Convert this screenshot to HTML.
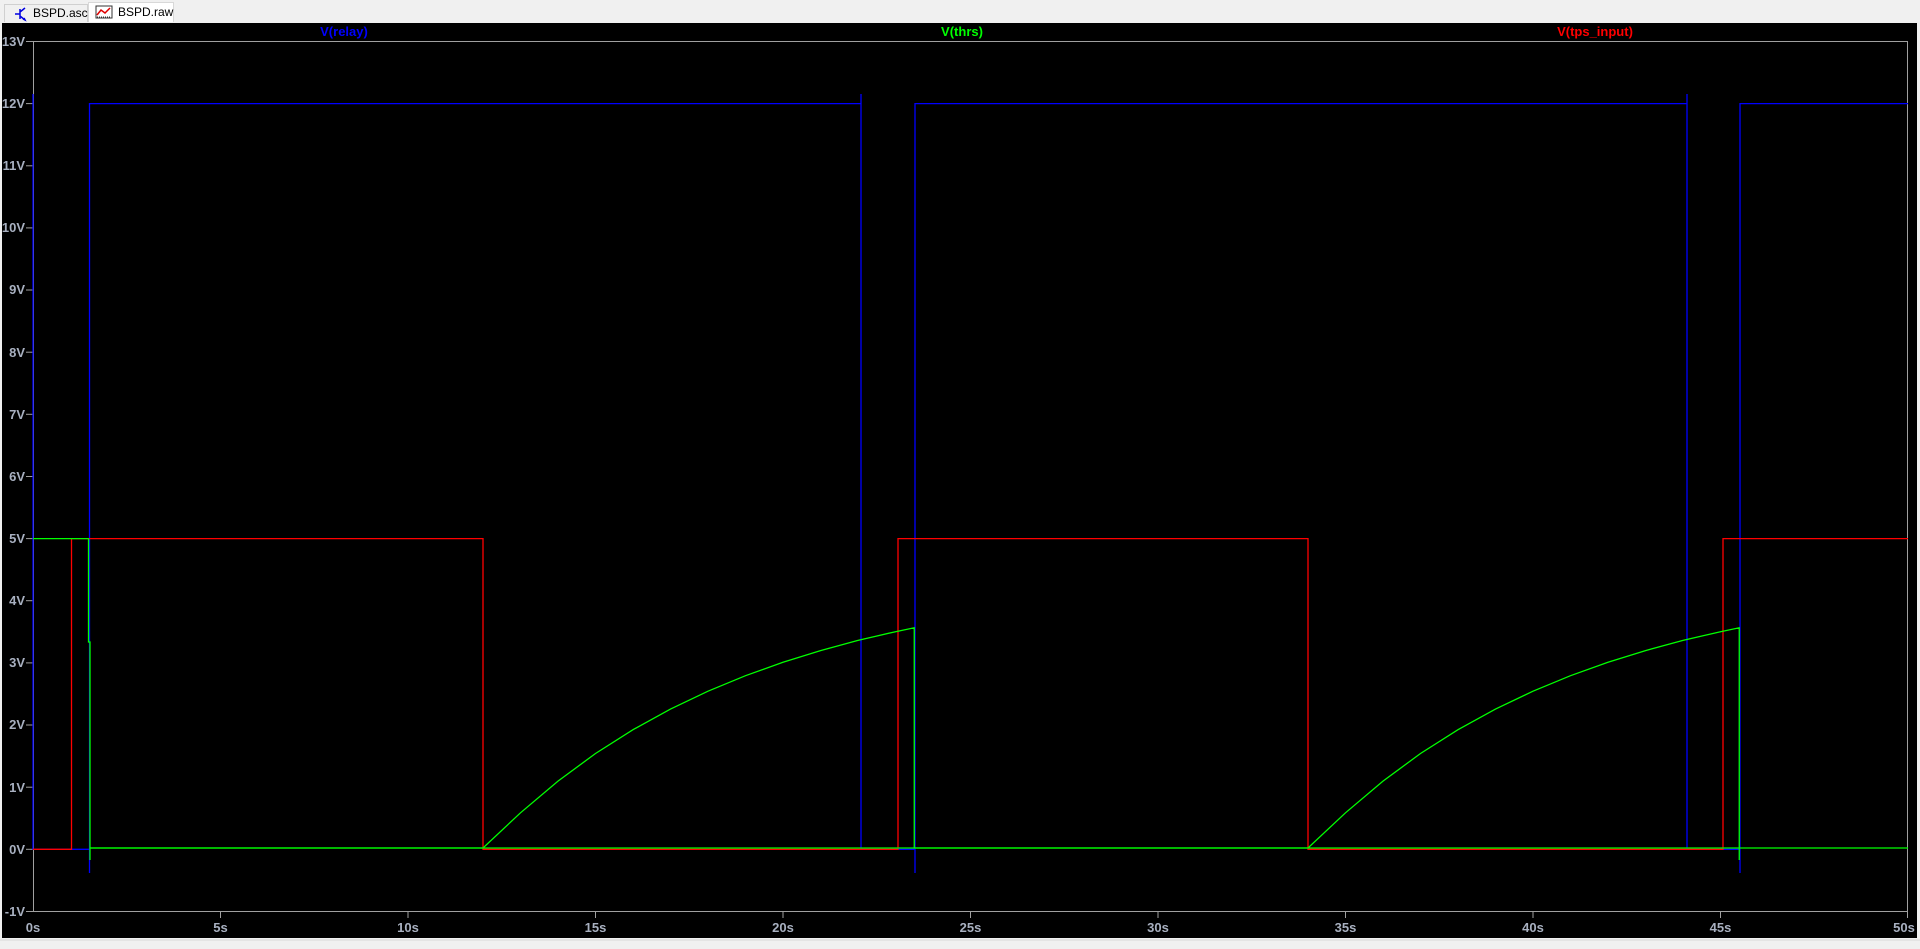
<!DOCTYPE html>
<html><head><meta charset="utf-8"><style>
html,body{margin:0;padding:0;width:1920px;height:949px;overflow:hidden;background:#f0f0f0;font-family:"Liberation Sans",sans-serif}
.tabs{position:absolute;left:0;top:0;width:1920px;height:22px;background:#f0f0f0}
.tab{position:absolute;top:2px;height:19px;font-size:12px;line-height:19px;color:#000}
</style></head><body>
<div class="tabs">
<div class="tab" style="left:4px;width:82px;border:1px solid #d0d0d0;border-bottom:none;top:4px;height:17px;line-height:17px">
<svg width="16" height="16" style="position:absolute;left:8px;top:1px" viewBox="0 0 16 16"><path d="M2 8H7M7 3V13M7 6L12 2M7 10L12 14M10 13L12 14L11 12" stroke="#0000e0" stroke-width="1.5" fill="none"/></svg>
<span style="position:absolute;left:28px">BSPD.asc</span></div>
<div class="tab" style="left:88px;width:84px;background:#fff;border:1px solid #d8d8d8;border-bottom:none">
<svg width="18" height="14" style="position:absolute;left:6px;top:2px" viewBox="0 0 18 14"><rect x="1" y="1" width="16" height="12" fill="#fff" stroke="#333"/><path d="M2 10L6 5L10 8L15 3" stroke="#e00000" stroke-width="1.5" fill="none"/><path d="M2 12H16" stroke="#333" stroke-dasharray="1 1"/></svg>
<span style="position:absolute;left:29px">BSPD.raw</span></div>
</div>
<svg width="1920" height="949" style="position:absolute;left:0;top:0" font-family="Liberation Sans, sans-serif">
<rect x="2" y="23" width="1915" height="915" fill="#000"/>
<rect x="1917" y="23" width="3" height="915" fill="#f0f0f0"/>
<rect x="0" y="938" width="1920" height="11" fill="#f0f0f0"/>
<line x1="0" y1="940" x2="1920" y2="940" stroke="#d8d8d8"/>
<rect x="33.5" y="41.5" width="1874" height="870" fill="none" stroke="#a0a0a0"/>
<g stroke="#a0a0a0">
<line x1="26" y1="41.5" x2="33" y2="41.5"/><line x1="26" y1="103.6" x2="33" y2="103.6"/><line x1="26" y1="165.8" x2="33" y2="165.8"/><line x1="26" y1="227.9" x2="33" y2="227.9"/><line x1="26" y1="290" x2="33" y2="290"/><line x1="26" y1="352.2" x2="33" y2="352.2"/><line x1="26" y1="414.3" x2="33" y2="414.3"/><line x1="26" y1="476.5" x2="33" y2="476.5"/><line x1="26" y1="538.6" x2="33" y2="538.6"/><line x1="26" y1="600.7" x2="33" y2="600.7"/><line x1="26" y1="662.9" x2="33" y2="662.9"/><line x1="26" y1="725" x2="33" y2="725"/><line x1="26" y1="787.2" x2="33" y2="787.2"/><line x1="26" y1="849.3" x2="33" y2="849.3"/><line x1="26" y1="911.5" x2="33" y2="911.5"/>
<line x1="220.5" y1="911" x2="220.5" y2="918"/><line x1="408" y1="911" x2="408" y2="918"/><line x1="595.5" y1="911" x2="595.5" y2="918"/><line x1="783" y1="911" x2="783" y2="918"/><line x1="970.5" y1="911" x2="970.5" y2="918"/><line x1="1158" y1="911" x2="1158" y2="918"/><line x1="1345.5" y1="911" x2="1345.5" y2="918"/><line x1="1533" y1="911" x2="1533" y2="918"/><line x1="1720.5" y1="911" x2="1720.5" y2="918"/><line x1="1907.5" y1="911" x2="1907.5" y2="918"/>
</g>
<g fill="#a8b0c0" font-size="13" font-weight="bold" text-anchor="end">
<text x="25" y="46">13V</text><text x="25" y="108">12V</text><text x="25" y="170">11V</text><text x="25" y="232">10V</text><text x="25" y="294">9V</text><text x="25" y="357">8V</text><text x="25" y="419">7V</text><text x="25" y="481">6V</text><text x="25" y="543">5V</text><text x="25" y="605">4V</text><text x="25" y="667">3V</text><text x="25" y="729">2V</text><text x="25" y="792">1V</text><text x="25" y="854">0V</text><text x="25" y="916">-1V</text>
</g>
<g fill="#a8b0c0" font-size="13" font-weight="bold" text-anchor="middle">
<text x="33" y="932">0s</text><text x="220.5" y="932">5s</text><text x="408" y="932">10s</text><text x="595.5" y="932">15s</text><text x="783" y="932">20s</text><text x="970.5" y="932">25s</text><text x="1158" y="932">30s</text><text x="1345.5" y="932">35s</text><text x="1533" y="932">40s</text><text x="1720.5" y="932">45s</text><text x="1904" y="932">50s</text>
</g>
<g font-size="13" font-weight="bold" text-anchor="middle">
<text x="344" y="36" fill="#0000ff">V(relay)</text>
<text x="962" y="36" fill="#00ff00">V(thrs)</text>
<text x="1595" y="36" fill="#ff0000">V(tps_input)</text>
</g>
<g fill="none" stroke-width="1.3">
<polyline stroke="#0000ff" points="33,94 33,849.3 89.5,849.3 89.5,873 89.5,103.6 861,103.6 861,94 861,849.3 915,849.3 915,873 915,103.6 1687,103.6 1687,94 1687,849.3 1740,849.3 1740,873 1740,103.6 1908,103.6"/>
<polyline stroke="#ff0000" points="33,849.3 71.5,849.3 71.5,538.6 483,538.6 483,849.3 898,849.3 898,538.6 1308,538.6 1308,849.3 1723,849.3 1723,538.6 1908,538.6"/>
<polyline stroke="#00ff00" points="33,538.6 88.5,538.6 88.5,642 90,642 90,860 90,848 1908,848"/>
<polyline stroke="#00ff00" points="90,848 483,848 520.5,812.8 558,781.1 595.5,753.5 633,729.7 670.5,709.1 708,691.2 745.5,675.7 783,662.3 820.5,650.6 858,640.4 895.5,631.7 914.25,627.8 914.25,848 1308,848 1345.5,812.8 1383,781.1 1420.5,753.5 1458,729.7 1495.5,709.1 1533,691.2 1570.5,675.7 1608,662.3 1645.5,650.6 1683,640.4 1720.5,631.7 1739.25,627.8 1739.25,860 1739.25,848"/>
</g>
</svg>
</body></html>
